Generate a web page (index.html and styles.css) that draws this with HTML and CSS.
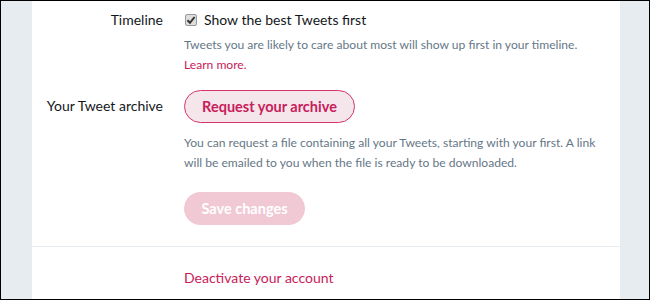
FILE: index.html
```html
<!DOCTYPE html>
<html>
<head>
<meta charset="utf-8">
<link rel="stylesheet" href="styles.css">
</head>
<body>
<div class="frame">
  <div class="panel">
    <div class="row row-timeline">
      <div class="label">Timeline</div>
      <div class="content">
        <label class="check">
          <span class="box"><svg width="10" height="10" viewBox="0 0 10 10"><path d="M1.5 5.2 L4 7.8 L8.6 2" fill="none" stroke="#333" stroke-width="2"/></svg></span>
          <span>Show the best Tweets first</span>
        </label>
        <p class="help">Tweets you are likely to care about most will show up first in your timeline.<br><a class="link">Learn more.</a></p>
      </div>
    </div>
    <div class="row row-archive">
      <div class="label label-btn">Your Tweet archive</div>
      <div class="content">
        <button class="btn btn-outline">Request your archive</button>
        <p class="help">You can request a file containing all your Tweets, starting with your first. A link will be emailed to you when the file is ready to be downloaded.</p>
        <button class="btn btn-save">Save changes</button>
      </div>
    </div>
    <div class="divider"></div>
    <div class="row row-deactivate">
      <div class="label"></div>
      <div class="content"><a class="link deact">Deactivate your account</a></div>
    </div>
  </div>
</div>
</body>
</html>
```

FILE: styles.css
```css
html, body { margin: 0; padding: 0; }
body { font-family: Lato, "Noto Sans", sans-serif; color: #14171a; }
.frame {
  width: 650px; height: 300px; box-sizing: border-box;
  border: 1px solid #000; background: #e6ecf0;
  padding: 0 29px 0 31px; overflow: hidden;
}
.panel { background: #fff; height: 100%; }
.row { display: flex; gap: 21px; }
.label {
  width: 131px; flex: none; text-align: right;
  font-size: 14px; line-height: 20px; color: #14171a;
}
.content { flex: none; width: 420px; }
.row-timeline { padding-top: 9px; }
.check { display: flex; align-items: center; font-size: 14px; line-height: 20px; gap: 7px; }
.box {
  width: 10px; height: 10px; border: 1px solid #999; border-radius: 2px;
  background: #ddd; display: flex; align-items: center; justify-content: center;
  margin-left: 1px;
}
.help {
  margin: 0; font-size: 12.1px; line-height: 20px; color: #657786;
}
.row-timeline .help { margin-top: 5px; }
.link { color: #c8205a; }
.row-archive { padding-top: 15px; }
.label-btn { padding-top: 6px; }
.btn {
  font-family: inherit; font-weight: 700; font-size: 14.5px; white-space: nowrap;
  height: 33px; border-radius: 17px; padding: 0 14px; display: block;
}
.btn-outline { background: #f5e6ec; border: 1px solid #d5336b; color: #c8205a; width: 171px; }
.row-archive .help { margin-top: 10px; }
.btn-save { background: #f0c9d5; border: none; color: #fff; width: 121px; margin-top: 19px; }
.divider { height: 1px; background: #e6ecf0; margin-top: 21px; }
.row-deactivate { padding-top: 20px; }
.deact { font-size: 14px; line-height: 20px; }
```
